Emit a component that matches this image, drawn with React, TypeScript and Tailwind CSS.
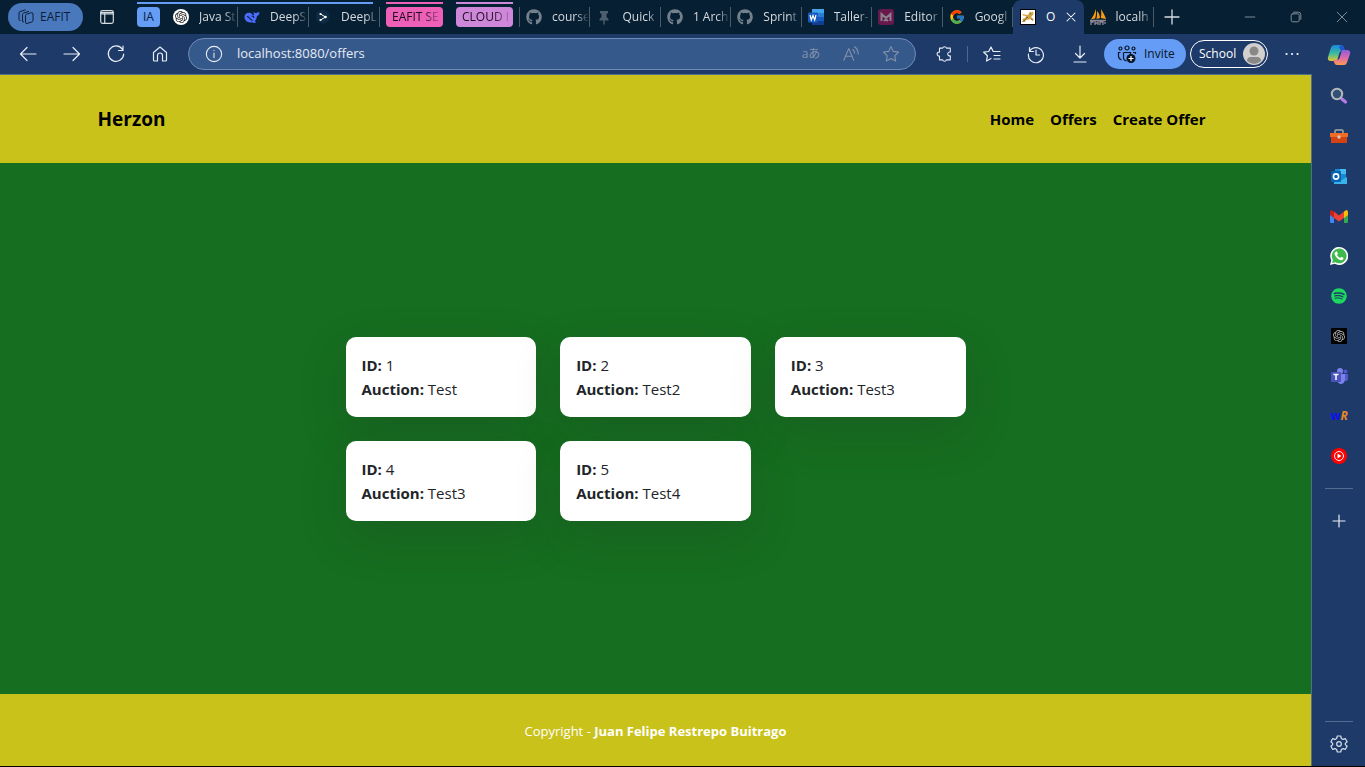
import React from "react";
import { FaGithub, FaSpotify } from "react-icons/fa";
import { FcGoogle } from "react-icons/fc";
import { SiOpenai } from "react-icons/si";

function Line({ children, className = "size-5", width = 1.2 }: { children: React.ReactNode; className?: string; width?: number }) {
  return (
    <svg viewBox="0 0 20 20" className={`shrink-0 ${className}`} fill="none" stroke="currentColor" strokeWidth={width} strokeLinecap="round" strokeLinejoin="round" aria-hidden="true">
      {children}
    </svg>
  );
}

function Pin() {
  return (
    <svg viewBox="0 0 16 16" className="size-4" aria-hidden="true">
      <path d="M4 2h8v2l-1.500 1v3l2 2v1.500H8.700V15L8 16l-.7-1v-3.500H3.500V10l2-2V5L4 4z" fill="#4d5e70" />
    </svg>
  );
}

function DeepSeek() {
  return (
    <svg viewBox="0 0 16 16" className="size-4" aria-hidden="true">
      <path d="M.5 7.500C.8 4.500 4 3 7 4.300c1.300.6 1.700 1.700 2.600 2.200.6-1-.1-2.300.2-3.500.9.8 1.400 1.100 2.400.9 1.200-.2 1.700-1 3.300-.7-.1 2-.9 3.300-2.500 3.700-.3 2.700-1.200 4.300-2.400 5.400.6.5 1.300.7 1.600 1.200-1.500.8-3.100.3-4.200-.2C3.300 14.400.3 11.300.5 7.500z" fill="#4d6bfe" />
      <path d="M3 7.500c2.300-.3 2.800 3.400 5.500 4M7.500 7c1.500-.1 2.300.8 2.400 1.800" fill="none" stroke="#071f33" strokeWidth="1.200" />
    </svg>
  );
}

function DeepL() {
  return (
    <svg viewBox="0 0 16 16" className="size-4" aria-hidden="true">
      <path d="M8 0l6.500 3.700v7.500L8 15l-6.500-3.800V3.700z" fill="#0f2b46" />
      <path d="M5.500 5l5 3-5 3" fill="none" stroke="#fff" strokeWidth="1" />
      <circle cx="5.500" cy="5" r="1.100" fill="#fff" /><circle cx="10.500" cy="8" r="1.300" fill="#fff" /><circle cx="5.500" cy="11" r="1.100" fill="#fff" />
    </svg>
  );
}

function Word() {
  return (
    <svg viewBox="0 0 16 16" className="size-4" aria-hidden="true">
      <path d="M4 0h12v4H4z" fill="#41a5ee" /><path d="M4 4h12v4H4z" fill="#2b7cd3" /><path d="M4 8h12v4H4z" fill="#185abd" /><path d="M4 12h12v4H4z" fill="#103f91" />
      <rect y="3.500" width="10" height="10" rx="1" fill="#185abd" />
      <path d="M2 6l1.300 5L5 6.500 6.700 11 8 6" fill="none" stroke="#fff" strokeWidth="1.200" />
    </svg>
  );
}

function Editor() {
  return (
    <svg viewBox="0 0 16 16" className="size-4" aria-hidden="true">
      <rect width="16" height="16" rx="3" fill="#67194d" />
      <path d="M3.500 12V5L8 9l4.500-4v7M6 12l2-1.500 2 1.500" fill="none" stroke="#8f7f8c" strokeWidth="2" />
    </svg>
  );
}

function Tomcat() {
  return (
    <svg viewBox="0 0 16 16" className="size-4" aria-hidden="true">
      <rect x=".5" y=".5" width="15" height="15" fill="#fff" stroke="#000" />
      <path d="M2 10l3-1 1-2-3-.5L2 5l3 .5 3 .5 1-2 1-1.500 1 1 2-1 .5 2.500-1.500 2-1 1 2 1.500 1 2-3-1.500-2 .5-3 .5-1 2H2l1.500-1.500z" fill="#d2a648" />
      <path d="M2.500 12.500l3-2M10 4.500l1 .5M8 8l-2 1.500M11 10l2 1.500" stroke="#59451d" strokeWidth=".8" />
    </svg>
  );
}

function PhpMyAdmin() {
  return (
    <svg viewBox="0 0 16 16" className="size-4" aria-hidden="true">
      <path d="M5.500 0C5 4 3 8 .8 10.500L5 9.500C6 7 6.500 3 5.500 0zM7 2c.2 3 0 6-.5 8l3.500-1C9.800 6 9 4 7 2zM11 0c.5 4 .2 7-.2 9L16 10c-1-3-3-7-5-10z" fill="#f89c0e" />
      <path d="M0 11.500h16M1 12v4m0-3h2v-1m2 0v4m0-2h3m0-2v4m2-4v4m0-3h3m0-1v4m2-3v2" fill="none" stroke="#8c8793" strokeWidth="1.300" />
    </svg>
  );
}

const githubIcon = <FaGithub className="size-4 text-[#74818c]" />;

type TabInfo = { label: string; icon: React.ReactNode; active?: boolean };

const aiTabs: TabInfo[] = [
  { label: "Java St", icon: <span className="flex size-4 items-center justify-center rounded-full bg-white text-[#222]"><SiOpenai className="size-3" /></span> },
  { label: "DeepS", icon: <DeepSeek /> },
  { label: "DeepL", icon: <DeepL /> },
];

const tabs: TabInfo[] = [
  { label: "course", icon: githubIcon },
  { label: "Quick", icon: <Pin /> },
  { label: "1 Arch", icon: githubIcon },
  { label: "Sprint", icon: githubIcon },
  { label: "Taller-", icon: <Word /> },
  { label: "Editor", icon: <Editor /> },
  { label: "Googl", icon: <FcGoogle className="size-4" /> },
  { label: "O", icon: <Tomcat />, active: true },
  { label: "localh", icon: <PhpMyAdmin /> },
];

function Tab({ tab }: { tab: TabInfo }) {
  if (tab.active) {
    return (
      <div className="flex h-[34px] min-w-0 flex-1 items-center rounded-t-lg bg-[#1d3a68] pl-[7px]">
        <a href="#offers" className="flex min-w-0 items-center gap-[10px] text-white">
          {tab.icon}
          <span>{tab.label}</span>
        </a>
        <button aria-label="Close tab" className="ml-2 text-white">
          <Line className="size-4" width={1.3}><path d="M5 5l10 10M15 5L5 15" /></Line>
        </button>
      </div>
    );
  }
  return (
    <a href="#tab" className="flex h-5 min-w-0 flex-1 items-center gap-[10px] border-r border-[#4c5b69] pl-[6px] text-[#d5dade]">
      <span className="shrink-0">{tab.icon}</span>
      <span className="min-w-0 flex-1 overflow-hidden whitespace-nowrap [mask-image:linear-gradient(to_right,black_65%,transparent)]">{tab.label}</span>
    </a>
  );
}

function Group({ label, className }: { label: string; className: string }) {
  return (
    <button className={`relative h-5 w-[57px] shrink-0 rounded pl-[6px] text-left text-[#1b0d1b] ${className}`}>
      <span className="absolute inset-x-0 -top-[5px] h-[2px] bg-inherit" />
      <span className="block overflow-hidden whitespace-nowrap [mask-image:linear-gradient(to_right,black_60%,transparent)]">{label}</span>
    </button>
  );
}

function TabStrip() {
  return (
    <div className="flex h-[34px] shrink-0 items-center bg-[#071f33] text-xs">
      <button className="ml-2 flex h-7 w-[75px] shrink-0 items-center gap-[6px] rounded-full bg-[#4a78bd] pl-[10px] text-[#0b1f38]">
        <svg viewBox="0 0 16 16" className="size-4" fill="none" stroke="currentColor" strokeWidth="1" aria-hidden="true">
          <path d="M7.500 6.500q0-1 1-1.300l5-1.500q1.500-.2 1.500 1.300v6.500q0 1-1 1.400l-5 1.600q-1.500.3-1.500-1.300zM4.500 12V5.500q0-1 1-1.400L11 2.300M4.500 12q0 1 1.500 1M1 10.500V4q0-1 1-1.400L7.500.8M1 10.500q0 1 1.500 1" />
        </svg>
        EAFIT
      </button>
      <button aria-label="Tab actions" className="ml-[15px] shrink-0 text-[#d7dde3]">
        <Line className="size-[18px]" width={1.3}><rect x="3" y="3" width="14" height="14" rx="2" /><path d="M3 5h14M3 6.500h14M7.500 6v11" /></Line>
      </button>
      <div className="relative ml-[21px] flex h-[34px] w-[243px] shrink-0 items-center">
        <span className="absolute top-[2px] right-[7px] left-0 h-[2px] bg-[#659cf5]" />
        <button className="mr-[7px] h-5 w-[23px] shrink-0 rounded bg-[#659cf5] text-[#08203c]">IA</button>
        {aiTabs.map((tab) => <Tab key={tab.label} tab={tab} />)}
      </div>
      <div className="ml-[6px] flex shrink-0 gap-[13px] pr-[6px]">
        <Group label="EAFIT SE" className="bg-[#ee5fb7]" />
        <Group label="CLOUD I" className="bg-[#cf87da]" />
      </div>
      <div className="flex h-[34px] max-w-[635px] min-w-0 flex-1 items-center">
        <span className="h-5 w-px shrink-0 bg-[#4c5b69]" />
        {tabs.map((tab) => <Tab key={tab.label} tab={tab} />)}
      </div>
      <button aria-label="New tab" className="ml-2 shrink-0 text-[#d7dde3]"><Line width={1.3}><path d="M10 3v14M3 10h14" /></Line></button>
      <div className="ml-auto flex shrink-0 text-[#83909b]">
        <button aria-label="Minimize" className="flex w-[46px] justify-center"><Line className="size-4"><path d="M4 10h12" /></Line></button>
        <button aria-label="Restore" className="flex w-[46px] justify-center"><Line className="size-4"><rect x="4" y="6" width="10" height="10" rx="2" /><path d="M7 4h6a3 3 0 013 3v6" /></Line></button>
        <button aria-label="Close" className="flex w-[46px] justify-center"><Line className="size-4"><path d="M4 4l12 12M16 4L4 16" /></Line></button>
      </div>
    </div>
  );
}

const navButton = "flex w-11 shrink-0 items-center justify-center";

function Toolbar() {
  return (
    <div className="flex h-10 shrink-0 items-center pl-[6px] text-[#e8edf5]">
      <button aria-label="Back" className={navButton}><Line><path d="M18 10H2.500M9 3.500L2.500 10 9 16.500" /></Line></button>
      <button aria-label="Forward" className={navButton}><Line><path d="M2 10h15.500M11 3.500l6.500 6.500-6.500 6.500" /></Line></button>
      <button aria-label="Refresh" className={navButton}><Line><path d="M16.500 5.500A7.700 7.700 0 1017.700 10M17 2v4.500h-4.500" /></Line></button>
      <button aria-label="Home" className={navButton}><Line><path d="M3.500 8.500L10 3l6.500 5.500V16a1 1 0 01-1 1h-3v-5.500a2.500 2.500 0 00-5 0V17h-3a1 1 0 01-1-1z" /></Line></button>
      <div className="ml-[6px] flex h-8 min-w-0 flex-1 items-center rounded-full border border-[#6f8bb8] bg-[#36598c] pr-1 pl-4">
        <Line className="size-[18px]"><circle cx="10" cy="10" r="8.500" /><path d="M10 9v5M10 6v.2" /></Line>
        <label htmlFor="address" className="ml-[14px] min-w-0 flex-1 text-[13px]">
          <span className="sr-only">Address</span>
          <input id="address" defaultValue="localhost:8080/offers" className="block w-full bg-transparent text-[#e6ebf2] outline-none" />
        </label>
        <div className="flex shrink-0 items-center text-[#8492a8]">
          <button aria-label="Translate" className="w-10 text-xs">aあ</button>
          <button aria-label="Read aloud" className="flex w-10 justify-center"><Line className="size-[18px]"><path d="M2 17L7.500 4 13 17M4 12.500h7M12 5q2 1.500 2 4M14 2q4 3 4 8" /></Line></button>
          <button aria-label="Add to favorites" className="flex w-10 justify-center"><Line className="size-[18px]"><path d="M10 1.800l2.600 5.300 5.800.8-4.200 4.100 1 5.800-5.200-2.700L4.800 17.800l1-5.800L1.600 7.900l5.800-.8z" /></Line></button>
        </div>
      </div>
      <button aria-label="Extensions" className="ml-[19px] shrink-0"><Line className="size-[18px]"><path d="M5 3.500h3.500a2.200 2.200 0 014.200 0H17v4.300a2.200 2.200 0 100 4.200v4.500h-4.300a2.200 2.200 0 01-4.200 0H5v-4.300a2.200 2.200 0 110-4.300z" /></Line></button>
      <span className="mr-[2px] ml-[14px] h-4 w-px shrink-0 bg-[#486895]" />
      <button aria-label="Favorites" className={navButton}><Line className="size-5"><path d="M9 14.500L4.500 17l.9-5.200L1.700 8.200l5-.7L9 3l2.200 4.500H18M12 11.500h6M12 15h6" /></Line></button>
      <button aria-label="History" className={navButton}><Line className="size-5"><path d="M3.500 3.500v4h4M3.700 7A7.500 7.500 0 112.500 10M10 6v5h3.500" /></Line></button>
      <button aria-label="Downloads" className={navButton}><Line className="size-5"><path d="M10 2v12M5.500 9.500L10 14l4.500-4.500M4 18h12" /></Line></button>
      <button className="ml-[2px] flex h-[30px] w-[82px] shrink-0 items-center gap-[7px] rounded-full bg-[#659cf5] pl-[13px] text-xs text-[#0a1728]">
        <svg viewBox="0 0 20 20" className="size-5 shrink-0" fill="none" stroke="currentColor" strokeWidth="1.200" aria-hidden="true">
          <circle cx="3.500" cy="4.500" r="1.500" /><circle cx="10" cy="4" r="2" /><circle cx="16.500" cy="4.500" r="1.500" />
          <path d="M3.500 8.500H1.500V12q0 3 3 4M6.500 8.500h7V11M6.500 8.500V14q0 2 3 3M16 8.500h2.500V10" /><circle cx="14" cy="14.500" r="4.500" fill="currentColor" stroke="none" /><path d="M14 12v5M11.500 14.500h5" stroke="#fff" />
        </svg>
        Invite
      </button>
      <button className="ml-1 flex h-7 w-[78px] shrink-0 items-center justify-between rounded-full border border-white pr-[2px] pl-2 text-xs text-white">
        School
        <svg viewBox="0 0 22 22" className="size-[22px]" aria-hidden="true"><circle cx="11" cy="11" r="11" fill="#d2d0ce" /><circle cx="11" cy="8" r="4.500" fill="#8a8886" /><path d="M4 18q0-4 4-4h6q4 0 4 4-7 6-14 0z" fill="#8a8886" /></svg>
      </button>
      <button aria-label="Settings and more" className="mr-[10px] ml-[14px] shrink-0"><Line width={2.2}><path d="M4.500 10h.1M10 10h.1M15.500 10h.1" /></Line></button>
    </div>
  );
}

function Copilot() {
  return (
    <svg viewBox="0 0 24 24" className="size-6" aria-hidden="true">
      <defs>
        <linearGradient id="cool" x1="0" y1="0" x2="0" y2="1"><stop stopColor="#168bdc" /><stop offset=".55" stopColor="#40bc9c" /><stop offset="1" stopColor="#e9c52b" /></linearGradient>
        <linearGradient id="warm" x1="0" y1="0" x2="0" y2="1"><stop stopColor="#8e5bdd" /><stop offset=".55" stopColor="#df6ba9" /><stop offset="1" stopColor="#ff9b50" /></linearGradient>
      </defs>
      <path d="M7 2h7q2 0 2.600 2L18 8h-3q-2 0-2.600 2L10 18H4q-4 0-3-4L4 4.500Q4.800 2 7 2z" fill="url(#cool)" />
      <path d="M14 2q2 0 2.600 2L18 8h-4l-2-4z" fill="#2053ce" />
      <path d="M17 22h-7q-2 0-2.600-2L6 17h4q2 0 2.600-2L15 7h5q4 0 3 4l-3 8.500Q19.200 22 17 22z" fill="url(#warm)" />
    </svg>
  );
}

const apps: { name: string; icon: React.ReactNode }[] = [
  { name: "Search", icon: <svg viewBox="0 0 18 18" className="size-[18px]"><path d="M12 12l3.500 3" stroke="#b57be8" strokeWidth="3.200" strokeLinecap="round" /><circle cx="7" cy="7" r="5.200" fill="#315078" stroke="#b5b8bb" strokeWidth="2" /></svg> },
  { name: "Tools", icon: <svg viewBox="0 0 18 18" className="size-[18px]"><path d="M5 6V4q0-1 1-1h6q1 0 1 1v2" fill="none" stroke="#a5a9ad" strokeWidth="1.500" /><path d="M0 6h18v4H0z" fill="#f06b25" /><path d="M1 10h16v6H1z" fill="#d54212" /><circle cx="9" cy="10" r="1.700" fill="#ccc" /></svg> },
  { name: "Outlook", icon: <svg viewBox="0 0 18 18" className="size-[18px]"><path d="M5 2h11v15H5z" fill="#168bd3" /><path d="M10 2h6v5h-6z" fill="#46baf0" /><path d="M4 10l6 4 7-4v7H4z" fill="#38b4ec" /><rect x="1" y="4" width="10" height="11" rx="1" fill="#0763ae" /><circle cx="6" cy="9.500" r="2.600" fill="none" stroke="#fff" strokeWidth="1.600" /></svg> },
  { name: "Gmail", icon: <svg viewBox="0 0 18 18" className="size-[18px]"><path d="M0 6l4 3v7H1q-1 0-1-1z" fill="#4285f4" /><path d="M14 9l4-3v9q0 1-1 1h-3z" fill="#34a853" /><path d="M14 4.500q4-3.500 4 1V8l-4 3z" fill="#fbbc04" /><path d="M4 4.500l5 4 5-4V11l-5 3.500L4 11z" fill="#ea4335" /><path d="M0 8V5.500Q0 1 4 4.500V11z" fill="#c5221f" /></svg> },
  { name: "WhatsApp", icon: <svg viewBox="0 0 18 18" className="size-[18px]"><path d="M0 18l1.300-4.700A9 9 0 114.700 16.800z" fill="#fff" /><path d="M2 16l.9-3.100A7.400 7.400 0 115.200 15.200z" fill="#40b94c" /><path d="M6.300 4.500q-3 1.200-1 4.300 2.300 3.900 5.700 4.400 2.500-.2 2.600-2.300l-2.300-1.100-1.100 1.200Q7.900 10 7 8l.9-1.200-.9-2.200z" fill="#fff" /></svg> },
  { name: "Spotify", icon: <FaSpotify className="size-4 text-[#1ed760]" /> },
  { name: "ChatGPT", icon: <span className="flex size-4 items-center justify-center bg-black text-[#b5b5b5]"><SiOpenai className="size-3" /></span> },
  { name: "Teams", icon: <svg viewBox="0 0 18 18" className="size-[18px]"><circle cx="10" cy="4" r="3" fill="#7b83eb" /><circle cx="15.500" cy="4.500" r="2" fill="#5059c9" /><path d="M7 7h8v6q-1 4-4 4t-4-4z" fill="#7b83eb" /><path d="M15 7h3v5q-1 3-3 2z" fill="#5059c9" /><rect x="1" y="5" width="10" height="10" rx="1" fill="#4b53bc" /><path d="M3.500 7.500h5M6 7.500V13" stroke="#fff" strokeWidth="1.500" /></svg> },
  { name: "WordReference", icon: <span className="text-xs leading-4 font-bold"><span className="text-[#0d10f0]">w</span><span className="text-[#e58b28] italic">R</span></span> },
  { name: "YouTube Music", icon: <svg viewBox="0 0 16 16" className="size-4"><circle cx="8" cy="8" r="8" fill="#f00" /><circle cx="8" cy="8" r="4.500" fill="none" stroke="#fff" /><path d="M6.500 5.500v5L10.500 8z" fill="#fff" /></svg> },
];

function Sidebar() {
  return (
    <aside className="flex w-[53px] shrink-0 flex-col items-center pl-px">
      <button aria-label="Copilot" className="flex h-[42px] shrink-0 items-center">
        <Copilot />
      </button>
      {apps.map((app) => (
        <button key={app.name} aria-label={app.name} className="flex h-10 w-full shrink-0 items-center justify-center">{app.icon}</button>
      ))}
      <span className="mt-3 h-px w-7 shrink-0 bg-[#526c91]" />
      <button aria-label="Customize" className="mt-[22px] text-[#e8edf5]"><Line><path d="M10 4v12M4 10h12" /></Line></button>
      <span className="mt-auto h-px w-7 shrink-0 bg-[#526c91]" />
      <button aria-label="Settings" className="mt-3 mb-3 text-[#d9e0eb]"><Line><path d="M8.300 2h3.400l.7 2.500 1.500.9 2.500-.7 1.700 3-1.800 1.700v1.200l1.800 1.700-1.700 3-2.500-.7-1.500.9-.7 2.500H8.300l-.7-2.500-1.500-.9-2.500.7-1.700-3 1.800-1.700V9.400L1.900 7.700l1.700-3 2.500.7 1.500-.9z" /><circle cx="10" cy="10" r="2.300" /></Line></button>
    </aside>
  );
}

const offers = [
  { id: 1, auction: "Test" },
  { id: 2, auction: "Test2" },
  { id: 3, auction: "Test3" },
  { id: 4, auction: "Test3" },
  { id: 5, auction: "Test4" },
];

function Page() {
  return (
    <div className="flex flex-1 flex-col border-t border-r border-[#536d8d] bg-[#166e20]">
      <header className="flex h-[88px] shrink-0 items-center bg-[#c9c21a] text-black">
        <div className="mx-auto flex w-full max-w-[1140px] items-center justify-between px-3">
          <a href="#home" className="text-[19px] leading-8 font-bold">Herzon</a>
          <nav className="flex gap-4 px-2 text-[15px] leading-6 font-bold">
            <a href="#home">Home</a>
            <a href="#offers">Offers</a>
            <a href="#create">Create Offer</a>
          </nav>
        </div>
      </header>
      <main className="flex flex-1 items-center justify-center px-4">
        <div className="grid w-full max-w-[620px] grid-cols-3 gap-6">
          {offers.map((offer) => (
            <article key={offer.id} className="relative rounded-[10px] bg-white p-4 text-[15px] leading-6 text-[#212529] shadow-[0_16px_48px_rgba(33,37,41,0.175)]">
              <p><strong>ID:</strong> {offer.id}</p>
              <p><strong>Auction:</strong> {offer.auction}</p>
            </article>
          ))}
        </div>
      </main>
      <footer className="flex h-[72px] shrink-0 items-center justify-center bg-[#c9c21a] pt-[3px] text-[13px] text-white">
        <p>Copyright - <strong>Juan Felipe Restrepo Buitrago</strong></p>
      </footer>
    </div>
  );
}

export default function App() {
  return (
    <div className="flex min-h-screen flex-col border-b border-black bg-[#1d3a68] font-['Open_Sans','Noto_Sans_CJK_JP',sans-serif]">
      <TabStrip />
      <div className="flex flex-1">
        <div className="flex min-w-0 flex-1 flex-col">
          <Toolbar />
          <Page />
        </div>
        <Sidebar />
      </div>
    </div>
  );
}
